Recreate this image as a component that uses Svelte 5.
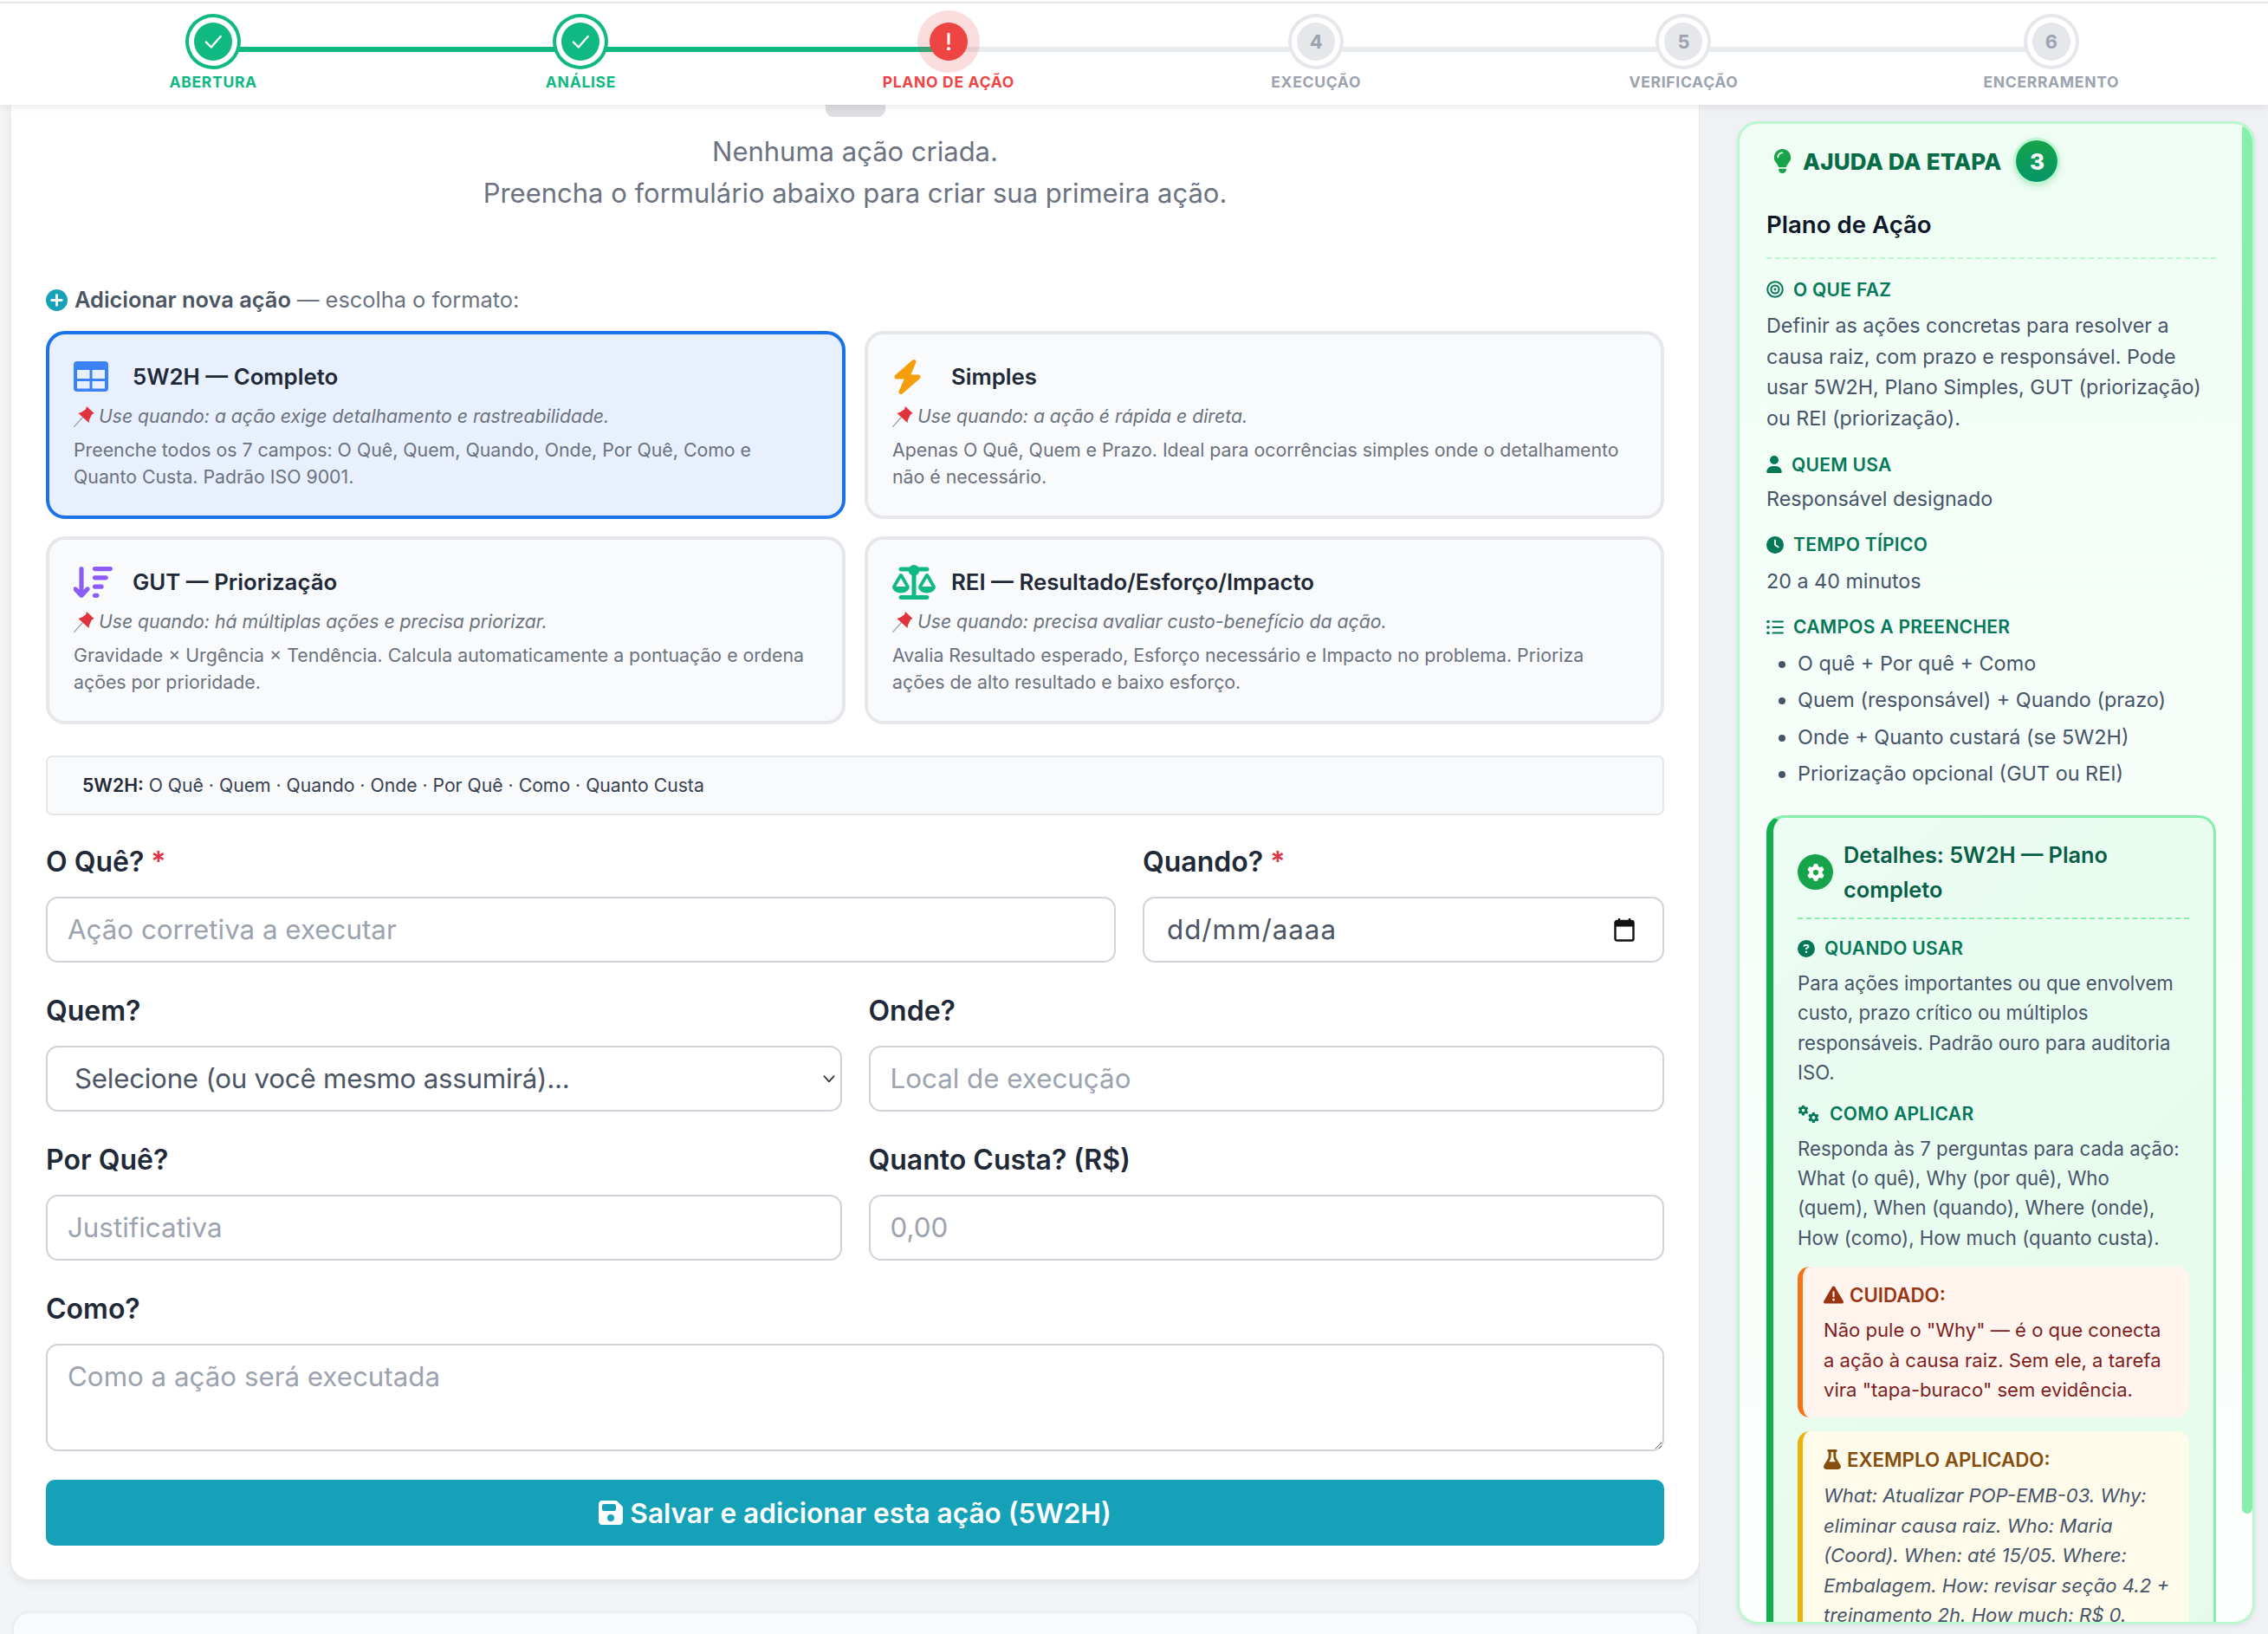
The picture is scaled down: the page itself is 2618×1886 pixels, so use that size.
<script>
  const steps = [
    { n: 1, label: 'Abertura', state: 'done' },
    { n: 2, label: 'Análise', state: 'done' },
    { n: 3, label: 'Plano de Ação', state: 'alert' },
    { n: 4, label: 'Execução', state: 'todo' },
    { n: 5, label: 'Verificação', state: 'todo' },
    { n: 6, label: 'Encerramento', state: 'todo' }
  ];

  const formats = [
    {
      icon: 'table',
      title: '5W2H — Completo',
      use: 'Use quando: a ação exige detalhamento e rastreabilidade.',
      text: 'Preenche todos os 7 campos: O Quê, Quem, Quando, Onde, Por Quê, Como e Quanto Custa. Padrão ISO 9001.',
      active: true
    },
    {
      icon: 'bolt',
      title: 'Simples',
      use: 'Use quando: a ação é rápida e direta.',
      text: 'Apenas O Quê, Quem e Prazo. Ideal para ocorrências simples onde o detalhamento não é necessário.'
    },
    {
      icon: 'sort',
      title: 'GUT — Priorização',
      use: 'Use quando: há múltiplas ações e precisa priorizar.',
      text: 'Gravidade × Urgência × Tendência. Calcula automaticamente a pontuação e ordena ações por prioridade.'
    },
    {
      icon: 'scale',
      title: 'REI — Resultado/Esforço/Impacto',
      use: 'Use quando: precisa avaliar custo-benefício da ação.',
      text: 'Avalia Resultado esperado, Esforço necessário e Impacto no problema. Prioriza ações de alto resultado e baixo esforço.'
    }
  ];

  const campos = [
    'O quê + Por quê + Como',
    'Quem (responsável) + Quando (prazo)',
    'Onde + Quanto custará (se 5W2H)',
    'Priorização opcional (GUT ou REI)'
  ];

  const gear = 'M495.9 166.6c3.2 8.7 .5 18.4-6.4 24.6l-43.3 39.4c1.1 8.3 1.7 16.8 1.7 25.4s-.6 17.1-1.7 25.4l43.3 39.4c6.9 6.2 9.6 15.9 6.4 24.6c-4.4 11.9-9.7 23.3-15.8 34.3l-4.7 8.1c-6.6 11-14 21.4-22.1 31.2c-5.9 7.2-15.7 9.6-24.5 6.8l-55.7-17.7c-13.4 10.3-28.2 18.9-44 25.4l-12.5 57.1c-2 9.1-9 16.3-18.2 17.8c-13.8 2.3-28 3.5-42.5 3.5s-28.7-1.2-42.5-3.5c-9.2-1.5-16.2-8.7-18.2-17.8l-12.5-57.1c-15.8-6.5-30.6-15.1-44-25.4L83.1 425.9c-8.8 2.8-18.6 .3-24.5-6.8c-8.1-9.8-15.5-20.2-22.1-31.2l-4.7-8.1c-6.1-11-11.4-22.4-15.8-34.3c-3.2-8.7-.5-18.4 6.4-24.6l43.3-39.4C64.6 273.1 64 264.6 64 256s.6-17.1 1.7-25.4L22.4 191.2c-6.9-6.2-9.6-15.9-6.4-24.6c4.4-11.9 9.7-23.3 15.8-34.3l4.7-8.1c6.6-11 14-21.4 22.1-31.2c5.9-7.2 15.7-9.6 24.5-6.8l55.7 17.7c13.4-10.3 28.2-18.9 44-25.4l12.5-57.1c2-9.1 9-16.3 18.2-17.8C227.3 1.2 241.5 0 256 0s28.7 1.2 42.5 3.5c9.2 1.5 16.2 8.7 18.2 17.8l12.5 57.1c15.8 6.5 30.6 15.1 44 25.4l55.7-17.7c8.8-2.8 18.6-.3 24.5 6.8c8.1 9.8 15.5 20.2 22.1 31.2l4.7 8.1c6.1 11 11.4 22.4 15.8 34.3zM256 336a80 80 0 1 0 0-160 80 80 0 1 0 0 160z';
</script>

<div class="app">
  <!-- stepper -->
  <header class="stepper">
    {#each steps as step, i}
      <div class="step {step.state}" class:linked={i < 2}>
        {#if i < steps.length - 1}<span class="line"></span>{/if}
        <span class="dot">
          {#if step.state === 'done'}
            <svg viewBox="0 0 24 24" width="26" height="26" fill="none" stroke="#fff" stroke-width="2.2" stroke-linecap="round" stroke-linejoin="round"><path d="M4.5 12.5 10 18 20 6.5" /></svg>
          {:else if step.state === 'alert'}
            <svg viewBox="0 0 24 24" width="26" height="26" fill="#fff"><rect x="10.6" y="2.5" width="2.8" height="13" rx="1.4" /><circle cx="12" cy="19.6" r="1.9" /></svg>
          {:else}
            {step.n}
          {/if}
        </span>
        <span class="step-label">{step.label}</span>
      </div>
    {/each}
  </header>

  <div class="workspace">
    <main class="content">
      <section class="card">
        <div class="pill"></div>
        <p class="empty">Nenhuma ação criada.<br />Preencha o formulário abaixo para criar sua primeira ação.</p>

        <div class="add-title">
          <svg viewBox="0 0 24 24" width="25" height="25"><circle cx="12" cy="12" r="12" fill="#17a2b8" /><path d="M12 6.5v11M6.5 12h11" stroke="#fff" stroke-width="2.8" stroke-linecap="round" /></svg>
          <span><b>Adicionar nova ação</b> — escolha o formato:</span>
        </div>

        <div class="formats">
          {#each formats as f}
            <div class="format" class:active={f.active}>
              <div class="format-head">
                <span class="format-icon">
                  {#if f.icon === 'table'}
                    <svg viewBox="0 0 40 35" width="40" height="35"><rect width="40" height="35" rx="4" fill="#3b82f6" /><rect x="4" y="10" width="14.5" height="10" fill="#e8effd" /><rect x="21.5" y="10" width="14.5" height="10" fill="#e8effd" /><rect x="4" y="23" width="14.5" height="8.5" fill="#e8effd" /><rect x="21.5" y="23" width="14.5" height="8.5" fill="#e8effd" /></svg>
                  {:else if f.icon === 'bolt'}
                    <svg viewBox="0 0 448 512" width="35" height="40" fill="#f59e0b"><path d="M349.4 44.6c5.9-13.7 1.5-29.7-10.6-38.5s-28.6-8-39.9 1.8l-256 224c-10 8.8-13.6 22.9-8.9 35.3S50.7 288 64 288H175.5L98.6 467.4c-5.9 13.7-1.5 29.7 10.6 38.5s28.6 8 39.9-1.8l256-224c10-8.8 13.6-22.9 8.9-35.3s-16.6-20.7-30-20.7H272.5L349.4 44.6z" /></svg>
                  {:else if f.icon === 'sort'}
                    <svg viewBox="16 32 560 448" width="45" height="36" fill="#8b5cf6"><path d="M151.6 469.6C145.5 476.2 137 480 128 480s-17.5-3.8-23.6-10.4l-88-96c-11.9-13-11.1-33.3 2-45.2s33.3-11.1 45.2 2L96 365.7V64c0-17.7 14.3-32 32-32s32 14.3 32 32V365.7l32.4-35.4c11.9-13 32.2-13.9 45.2-2s13.9 32.2 2 45.2l-88 96zM320 480c-17.7 0-32-14.3-32-32s14.3-32 32-32h32c17.7 0 32 14.3 32 32s-14.3 32-32 32H320zm0-128c-17.7 0-32-14.3-32-32s14.3-32 32-32h96c17.7 0 32 14.3 32 32s-14.3 32-32 32H320zm0-128c-17.7 0-32-14.3-32-32s14.3-32 32-32H480c17.7 0 32 14.3 32 32s-14.3 32-32 32H320zm0-128c-17.7 0-32-14.3-32-32s14.3-32 32-32H544c17.7 0 32 14.3 32 32s-14.3 32-32 32H320z" /></svg>
                  {:else}
                    <svg viewBox="0 0 640 512" width="50" height="40" fill="#10b981"><path d="M384 32H512c17.7 0 32 14.3 32 32s-14.3 32-32 32H398.4c-5.2 25.8-22.9 47.1-46.4 57.3V448H512c17.7 0 32 14.3 32 32s-14.3 32-32 32H320 128c-17.7 0-32-14.3-32-32s14.3-32 32-32H288V153.3c-23.5-10.3-41.2-31.6-46.4-57.3H128c-17.7 0-32-14.3-32-32s14.3-32 32-32H256c14.6-19.4 37.8-32 64-32s49.4 12.6 64 32zm55.6 288H584.4L512 195.8 439.6 320zM512 416c-62.9 0-115.2-34-126-78.9c-2.6-11 1-22.3 6.7-32.1l95.2-163.2c5-8.6 14.2-13.8 24.1-13.8s19.1 5.3 24.1 13.8l95.2 163.2c5.7 9.8 9.3 21.1 6.7 32.1C627.2 382 574.9 416 512 416zM126.8 195.8L54.4 320H199.3L126.8 195.8zM.9 337.1c-2.6-11 1-22.3 6.7-32.1l95.2-163.2c5-8.6 14.2-13.8 24.1-13.8s19.1 5.3 24.1 13.8l95.2 163.2c5.7 9.8 9.3 21.1 6.7 32.1C242 382 189.7 416 126.8 416S11.7 382 .9 337.1z" /></svg>
                  {/if}
                </span>
                <span class="format-title">{f.title}</span>
              </div>
              <div class="format-use">
                <svg viewBox="0 0 24 24" width="24" height="24"><path d="M.8 23.4 10 13" stroke="#9ca3af" stroke-width="1.4" stroke-linecap="round" /><path d="M15 0 23.5 8 21 9.5 18 15.5 17.5 19 5.5 8 9 6.8 14 3.5Z" fill="#e0343c" /></svg>
                <span>{f.use}</span>
              </div>
              <p class="format-text">{f.text}</p>
            </div>
          {/each}
        </div>

        <div class="fields-hint"><b>5W2H:</b> O Quê · Quem · Quando · Onde · Por Quê · Como · Quanto Custa</div>

        <form class="form-grid">
          <div class="field span-8">
            <label for="oque">O Quê? <em>*</em></label>
            <input id="oque" placeholder="Ação corretiva a executar" />
          </div>
          <div class="field span-4">
            <label for="quando">Quando? <em>*</em></label>
            <div id="quando" class="date-box">
              <span>dd/mm/aaaa</span>
              <svg viewBox="0 0 24 28" width="24" height="28"><path d="M6 1v5M18 1v5" stroke="#111" stroke-width="2.4" /><rect x="1.5" y="4" width="21" height="22.5" rx="2" fill="#fff" stroke="#111" stroke-width="2.4" /><rect x="1.5" y="4" width="21" height="6.5" fill="#111" /></svg>
            </div>
          </div>
          <div class="field span-6">
            <label for="quem">Quem?</label>
            <div class="select-wrap">
              <select id="quem"><option>Selecione (ou você mesmo assumirá)...</option></select>
              <svg viewBox="0 0 16 16" width="18" height="18" fill="none" stroke="#343a40" stroke-width="1.6" stroke-linecap="round" stroke-linejoin="round"><path d="M3 5.5 8 11l5-5.5" /></svg>
            </div>
          </div>
          <div class="field span-6">
            <label for="onde">Onde?</label>
            <input id="onde" placeholder="Local de execução" />
          </div>
          <div class="field span-6">
            <label for="porque">Por Quê?</label>
            <input id="porque" placeholder="Justificativa" />
          </div>
          <div class="field span-6">
            <label for="custo">Quanto Custa? (R$)</label>
            <input id="custo" placeholder="0,00" />
          </div>
          <div class="field span-12">
            <label for="como">Como?</label>
            <textarea id="como" placeholder="Como a ação será executada"></textarea>
          </div>
          <button type="button" class="save span-12">
            <svg viewBox="0 0 448 512" width="28" height="32" fill="#fff"><path d="M64 32C28.7 32 0 60.7 0 96V416c0 35.3 28.7 64 64 64H384c35.3 0 64-28.7 64-64V173.3c0-17-6.7-33.3-18.7-45.3L352 50.7C340 38.7 323.7 32 306.7 32H64zm0 96c0-17.7 14.3-32 32-32H288c17.7 0 32 14.3 32 32v64c0 17.7-14.3 32-32 32H96c-17.7 0-32-14.3-32-32V128zM224 288a64 64 0 1 1 0 128 64 64 0 1 1 0-128z" /></svg>
            Salvar e adicionar esta ação (5W2H)
          </button>
        </form>
      </section>
      <section class="card-next"></section>
    </main>

    <aside class="side">
      <div class="help">
        <div class="thumb"></div>
        <div class="help-head">
          <svg viewBox="0 0 384 512" width="21" height="28" fill="#16a34a"><path d="M272 384c9.6-31.9 29.5-59.1 49.2-86.2c5.2-7.1 10.4-14.2 15.4-21.4c19.8-28.5 31.4-63 31.4-100.3C368 78.8 289.2 0 192 0S16 78.8 16 176c0 37.3 11.6 71.9 31.4 100.3c5 7.2 10.2 14.3 15.4 21.4c19.8 27.1 39.7 54.4 49.2 86.2H272zM192 512c44.2 0 80-35.8 80-80V416H112v16c0 44.2 35.8 80 80 80zM112 176c0 8.8-7.2 16-16 16s-16-7.2-16-16c0-61.9 50.1-112 112-112c8.8 0 16 7.2 16 16s-7.2 16-16 16c-44.2 0-80 35.8-80 80z" /></svg>
          <span class="help-title">AJUDA DA ETAPA</span>
          <span class="badge">3</span>
        </div>
        <h2 class="help-step">Plano de Ação</h2>

        <div class="tag first">
          <svg viewBox="0 0 20 20" width="20" height="20" fill="none" stroke="#047857" stroke-width="2"><circle cx="10" cy="10" r="8.8" /><circle cx="10" cy="10" r="4.6" /><circle cx="10" cy="10" r="1.4" fill="#047857" stroke="none" /></svg>
          O QUE FAZ
        </div>
        <p class="help-text">Definir as ações concretas para resolver a causa raiz, com prazo e responsável. Pode usar 5W2H, Plano Simples, GUT (priorização) ou REI (priorização).</p>

        <div class="tag who">
          <svg viewBox="0 0 448 512" width="18" height="20" fill="#047857"><path d="M224 256A128 128 0 1 0 224 0a128 128 0 1 0 0 256zm-45.7 48C79.8 304 0 383.8 0 482.3C0 498.7 13.3 512 29.7 512H418.3c16.4 0 29.7-13.3 29.7-29.7C448 383.8 368.2 304 269.7 304H178.3z" /></svg>
          QUEM USA
        </div>
        <p class="help-text short">Responsável designado</p>

        <div class="tag next">
          <svg viewBox="0 0 512 512" width="20" height="20" fill="#047857"><path d="M256 0a256 256 0 1 1 0 512A256 256 0 1 1 256 0zM232 120V256c0 8 4 15.5 10.7 20l96 64c11 7.4 25.9 4.4 33.3-6.7s4.4-25.9-6.7-33.3L280 243.2V120c0-13.3-10.7-24-24-24s-24 10.7-24 24z" /></svg>
          TEMPO TÍPICO
        </div>
        <p class="help-text">20 a 40 minutos</p>

        <div class="tag next">
          <svg viewBox="0 0 20 20" width="20" height="20" fill="#047857"><circle cx="2" cy="3.5" r="1.8" /><circle cx="2" cy="10" r="1.8" /><circle cx="2" cy="16.5" r="1.8" /><rect x="6.5" y="2.4" width="13.5" height="2.2" rx="1" /><rect x="6.5" y="8.9" width="13.5" height="2.2" rx="1" /><rect x="6.5" y="15.4" width="13.5" height="2.2" rx="1" /></svg>
          CAMPOS A PREENCHER
        </div>
        <ul class="help-list">
          {#each campos as c}<li>{c}</li>{/each}
        </ul>

        <div class="detail">
          <div class="detail-head">
            <span class="detail-icon"><svg viewBox="0 0 512 512" width="20" height="20" fill="#fff"><path d={gear} /></svg></span>
            <h3>Detalhes: 5W2H — Plano completo</h3>
          </div>

          <div class="tag first-in">
            <svg viewBox="0 0 512 512" width="20" height="20" fill="#047857"><path d="M256 512A256 256 0 1 0 256 0a256 256 0 1 0 0 512zM169.8 165.3c7.9-22.3 29.1-37.3 52.8-37.3h58.3c34.9 0 63.1 28.3 63.1 63.1c0 22.6-12.1 43.5-31.7 54.8L280 264.4c-.2 13-10.9 23.6-24 23.6c-13.3 0-24-10.7-24-24V250.5c0-8.6 4.6-16.5 12.1-20.8l44.3-25.4c4.7-2.7 7.6-7.7 7.6-13.1c0-8.4-6.8-15.1-15.1-15.1H222.6c-3.4 0-6.4 2.1-7.5 5.3l-.4 1.2c-4.4 12.5-18.2 19-30.6 14.6s-19-18.2-14.6-30.6l.4-1.2zM224 352a32 32 0 1 1 64 0 32 32 0 1 1 -64 0z" /></svg>
            QUANDO USAR
          </div>
          <p class="detail-text">Para ações importantes ou que envolvem custo, prazo crítico ou múltiplos responsáveis. Padrão ouro para auditoria ISO.</p>

          <div class="tag second-in">
            <svg viewBox="0 0 640 512" width="26" height="20" fill="#047857"><path transform="scale(.6) translate(0 -20)" d={gear} /><path transform="translate(300 200) scale(.62)" d={gear} /></svg>
            COMO APLICAR
          </div>
          <p class="detail-text">Responda às 7 perguntas para cada ação: What (o quê), Why (por quê), Who (quem), When (quando), Where (onde), How (como), How much (quanto custa).</p>

          <div class="note caution">
            <div class="note-head">
              <svg viewBox="0 0 512 512" width="23" height="23" fill="#9a3412"><path d="M256 32c14.2 0 27.3 7.5 34.5 19.8l216 368c7.3 12.4 7.3 27.7 .2 40.1S486.3 480 472 480H40c-14.3 0-27.6-7.7-34.7-20.1s-7-27.8 .2-40.1l216-368C228.7 39.5 241.8 32 256 32zm0 128c-13.3 0-24 10.7-24 24V296c0 13.3 10.7 24 24 24s24-10.7 24-24V184c0-13.3-10.7-24-24-24zm32 224a32 32 0 1 0 -64 0 32 32 0 1 0 64 0z" /></svg>
              CUIDADO:
            </div>
            <p>Não pule o "Why" — é o que conecta a ação à causa raiz. Sem ele, a tarefa vira "tapa-buraco" sem evidência.</p>
          </div>

          <div class="note example">
            <div class="note-head">
              <svg viewBox="0 0 448 512" width="20" height="23" fill="#854d0e"><path d="M288 0H160 128C110.3 0 96 14.3 96 32s14.3 32 32 32V196.8c0 11.8-3.3 23.5-9.5 33.5L10.3 406.2C3.6 417.2 0 429.7 0 442.6C0 480.9 31.1 512 69.4 512H378.6c38.3 0 69.4-31.1 69.4-69.4c0-12.8-3.6-25.4-10.3-36.4L329.5 230.4c-6.2-10.1-9.5-21.7-9.5-33.5V64c17.7 0 32-14.3 32-32s-14.3-32-32-32H288zM192 196.8V64h64V196.8c0 23.7 6.6 46.9 19 67.1L309.5 320h-171L173 263.9c12.4-20.2 19-43.4 19-67.1z" /></svg>
              EXEMPLO APLICADO:
            </div>
            <p>What: Atualizar POP-EMB-03. Why: eliminar causa raiz. Who: Maria (Coord). When: até 15/05. Where: Embalagem. How: revisar seção 4.2 + treinamento 2h. How much: R$ 0.</p>
          </div>
        </div>
      </div>
    </aside>
  </div>
</div>

<style>
  :global(body) {
    margin: 0;
    background: #f3f4f6;
    font-family: Inter, 'Noto Sans', sans-serif;
  }

  * { box-sizing: border-box; }

  .app {
    height: 100vh;
    overflow: hidden;
    display: flex;
    flex-direction: column;
    background: #fff;
  }

  /* stepper */
  .stepper {
    position: relative;
    z-index: 3;
    flex: none;
    height: 119px;
    margin-top: 2px;
    border-top: 2px solid #e5e7eb;
    padding: 22px 38px 0 34px;
    display: grid;
    grid-template-columns: repeat(6, 1fr);
    background: #fff;
    box-shadow: 0 3px 8px rgba(0, 0, 0, .08);
  }

  .step {
    position: relative;
    display: flex;
    flex-direction: column;
    align-items: center;
  }

  .line {
    position: absolute;
    top: 28px;
    left: 50%;
    width: 100%;
    height: 6px;
    background: #e9ecef;
  }

  .linked .line { background: #10b981; }

  .dot {
    position: relative;
    z-index: 1;
    width: 44px;
    height: 44px;
    border-radius: 50%;
    display: flex;
    align-items: center;
    justify-content: center;
    background: #e5e7eb;
    color: #9ca3af;
    font-size: 22px;
    font-weight: 700;
    box-shadow: 0 0 0 6px #fff, 0 0 0 10px #e5e7eb;
  }

  .done .dot {
    background: #10b981;
    box-shadow: 0 0 0 6px #fff, 0 0 0 10px #10b981;
  }

  .alert .dot {
    background: #ef4444;
    box-shadow: 0 0 0 14px rgba(239, 68, 68, .18);
  }

  .step-label {
    margin-top: 16px;
    font-size: 17.5px;
    line-height: 18px;
    font-weight: 700;
    letter-spacing: .7px;
    text-transform: uppercase;
    white-space: nowrap;
    color: #9ca3af;
  }

  .done .step-label { color: #10b981; }
  .alert .step-label { color: #ef4444; }

  /* main column */
  .workspace {
    flex: 1;
    min-height: 0;
    display: grid;
    grid-template-columns: 1961px 1fr;
    overflow: hidden;
    background: #f3f4f6;
  }

  .content {
    padding: 0 0 0 13px;
    overflow: hidden;
  }

  .card {
    padding: 0 40px 39px;
    background: #fff;
    border-radius: 0 0 22px 22px;
    box-shadow: 0 4px 12px rgba(0, 0, 0, .08);
  }

  .pill {
    width: 69px;
    height: 14px;
    margin: 0 auto;
    background: #dcdee2;
    border-radius: 0 0 9px 9px;
  }

  .empty {
    margin: 16px 0 0;
    text-align: center;
    font-size: 31px;
    line-height: 48px;
    color: #6b7280;
  }

  .add-title {
    margin-top: 79px;
    display: flex;
    align-items: center;
    gap: 8px;
    font-size: 25.4px;
    line-height: 40px;
    color: #6b7280;
  }

  .add-title b {
    font-weight: 600;
    color: #4b5563;
  }

  .formats {
    margin-top: 16px;
    display: grid;
    grid-template-columns: 1fr 1fr;
    grid-auto-rows: 1fr;
    gap: 20px 22px;
  }

  .format {
    padding: 31px 28px 29px;
    background: #f9fafb;
    border: 4px solid #e5e7eb;
    border-radius: 22px;
  }

  .format.active {
    background: #e8effd;
    border-color: #1a73e8;
  }

  .format-head {
    height: 35px;
    display: flex;
    align-items: center;
  }

  .format-icon {
    width: 68px;
    flex: none;
    display: flex;
    align-items: center;
  }

  .format-title {
    font-size: 25.8px;
    font-weight: 600;
    color: #1f2937;
  }

  .format-use {
    margin-top: 13px;
    display: flex;
    align-items: center;
    gap: 5px;
    font-size: 21.2px;
    line-height: 31px;
    font-style: italic;
    color: #6b7280;
  }

  .format-text {
    margin: 8px 0 0;
    font-size: 21.3px;
    line-height: 31px;
    color: #6b7280;
  }

  .fields-hint {
    margin-top: 36px;
    height: 69px;
    padding: 17px 40px;
    background: #f9fafb;
    border: 2px solid #e5e7eb;
    border-radius: 7px;
    font-size: 21.2px;
    line-height: 31px;
    color: #374151;
  }

  .fields-hint b {
    font-weight: 600;
    color: #1f2937;
  }

  /* form */
  .form-grid {
    margin-top: 31px;
    display: grid;
    grid-template-columns: repeat(12, 1fr);
    gap: 33px 31px;
  }

  .span-4 { grid-column: span 4; }
  .span-6 { grid-column: span 6; }
  .span-8 { grid-column: span 8; }
  .span-12 { grid-column: span 12; }

  .field label {
    display: block;
    margin: -2px 0 15px;
    font-size: 32px;
    line-height: 50px;
    font-weight: 600;
    color: #1f2937;
  }

  .field em {
    font-style: normal;
    color: #dc3545;
  }

  input, select, textarea, .date-box {
    display: block;
    width: 100%;
    height: 76px;
    padding: 0 23px;
    background: #fff;
    border: 2px solid #ced4da;
    border-radius: 14px;
    font-family: inherit;
    font-size: 31.3px;
    color: #4b5563;
    outline: none;
  }

  input::placeholder, textarea::placeholder {
    color: #9ca3af;
    opacity: 1;
  }

  .date-box {
    display: flex;
    align-items: center;
    justify-content: space-between;
    padding-right: 32px;
  }

  .date-box span {
    padding-left: 3px;
    letter-spacing: 1px;
  }

  .select-wrap { position: relative; }

  select {
    appearance: none;
    padding-left: 31px;
    letter-spacing: -.25px;
  }

  .select-wrap svg {
    position: absolute;
    right: 6px;
    top: 29px;
  }

  textarea {
    height: 124px;
    padding-top: 14px;
    line-height: 44px;
    resize: vertical;
  }

  .save {
    height: 76px;
    display: flex;
    align-items: center;
    justify-content: center;
    gap: 8px;
    border: none;
    border-radius: 10px;
    background: #15a2b8;
    color: #fff;
    font-family: inherit;
    font-size: 31.6px;
    font-weight: 600;
  }

  .card-next {
    height: 200px;
    margin-top: 36px;
    background: #f9fafb;
    border: 3px solid #eceef1;
    border-radius: 22px;
  }

  /* help panel */
  .side {
    padding: 19px 15px 11px 43px;
    background: #eff1f4;
    border-left: 1px solid #e5e7eb;
    min-height: 0;
  }

  .help {
    position: relative;
    height: 100%;
    overflow: hidden;
    padding: 19px 42px 0 31px;
    background: linear-gradient(180deg, #effdf4 0%, #f6fef9 45%, #fcfffd 100%);
    border: 3px solid #bbf7d0;
    border-radius: 24px;
    box-shadow: 0 2px 6px rgba(0, 0, 0, .06);
  }

  .thumb {
    position: absolute;
    top: 0;
    right: 0;
    width: 12px;
    height: 1604px;
    background: #86efac;
    border-radius: 6px;
  }

  .help-head {
    display: flex;
    align-items: center;
    height: 48px;
    padding-left: 8px;
  }

  .help-title {
    margin-left: 13px;
    font-size: 26px;
    font-weight: 800;
    letter-spacing: .2px;
    color: #076d47;
    white-space: nowrap;
  }

  .badge {
    margin-left: 17px;
    width: 48px;
    height: 48px;
    border-radius: 50%;
    display: flex;
    align-items: center;
    justify-content: center;
    background: linear-gradient(180deg, #16a34a, #059669);
    color: #fff;
    font-size: 26px;
    font-weight: 800;
    box-shadow: 0 0 0 3px #bbf7d0, 0 3px 10px rgba(22, 163, 74, .35);
  }

  .help-step {
    margin: 29px 0 0;
    padding-bottom: 18px;
    border-bottom: 2px dashed #bbf7d0;
    font-size: 27.6px;
    line-height: 40px;
    font-weight: 600;
    color: #0f172a;
  }

  .tag {
    display: flex;
    align-items: center;
    gap: 11px;
    height: 28px;
    font-size: 21px;
    font-weight: 600;
    letter-spacing: .3px;
    color: #047857;
    white-space: nowrap;
  }

  .tag.first { margin-top: 21px; }
  .tag.who { margin-top: 22px; }
  .tag.next { margin-top: 21px; }
  .tag.first-in { margin-top: 20px; }
  .tag.second-in { margin-top: 16px; }

  .help-text {
    margin: 10px 0 0;
    font-size: 23.3px;
    line-height: 35.6px;
    color: #475569;
  }

  .help-text.short { margin-top: 8px; }

  .help-list {
    margin: 10px 0 0;
    padding: 0 0 0 36px;
    font-size: 23.4px;
    line-height: 35.6px;
    color: #475569;
  }

  .help-list li { margin-bottom: 7px; }

  .detail {
    margin-top: 30px;
    padding: 23px 28px 40px;
    background: linear-gradient(135deg, #ecfdf3, #e4fbea);
    border: 3px solid #86efac;
    border-left: 8px solid #12b14d;
    border-radius: 20px;
  }

  .detail-head {
    display: flex;
    align-items: center;
    gap: 12px;
    padding-bottom: 12px;
    border-bottom: 2px dashed #86efac;
  }

  .detail-icon {
    width: 41px;
    height: 41px;
    flex: none;
    border-radius: 50%;
    display: flex;
    align-items: center;
    justify-content: center;
    background: #16a34a;
  }

  .detail-head h3 {
    margin: 0;
    font-size: 25.3px;
    line-height: 40px;
    font-weight: 600;
    color: #065f46;
  }

  .detail-text {
    margin: 9px 0 0;
    max-width: 443px;
    font-size: 22.2px;
    line-height: 34.4px;
    color: #475569;
  }

  .note {
    padding: 18px 20px 15px 24px;
    border-left: 6px solid;
    border-radius: 14px;
  }

  .note-head {
    display: flex;
    align-items: center;
    gap: 7px;
    height: 28px;
    font-size: 22.3px;
    font-weight: 600;
  }

  .note p {
    margin: 10px 0 0;
    font-size: 22.1px;
    line-height: 34.4px;
  }

  .caution {
    margin-top: 16px;
    background: #fff5ee;
    border-color: #f97316;
  }

  .caution .note-head { color: #9a3412; }
  .caution p { color: #7f1d1d; }

  .example {
    margin-top: 16px;
    background: #fffbeb;
    border-color: #eab308;
  }

  .example .note-head { color: #854d0e; }

  .example p {
    margin-top: 11px;
    font-style: italic;
    color: #475569;
  }
</style>
